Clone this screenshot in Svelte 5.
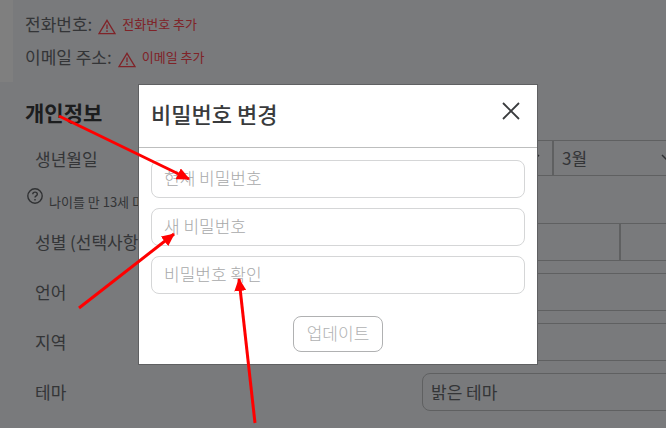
<script>
	let open = true;
	let current = '';
	let next = '';
	let confirm = '';

	let month = '3';
	let language = '';
	let region = '';
	let theme = 'light';

	const contacts = [
		{ label: '전화번호:', action: '전화번호 추가' },
		{ label: '이메일 주소:', action: '이메일 추가' }
	];

	function close() {
		open = false;
	}
</script>

<div class="page">
	<div class="account">
		<div class="side"></div>
		<div class="contacts">
			{#each contacts as contact}
				<div class="contact">
					<span>{contact.label}</span>
					<svg class="warning" viewBox="0 0 18 16" aria-hidden="true">
						<path d="M9 1.3 L17 14.7 H1 Z" />
						<path d="M9 5.5 V10 M9 11.3 V13" />
					</svg>
					<a href="#add">{contact.action}</a>
				</div>
			{/each}
		</div>
	</div>

	<section class="personal">
		<h2>개인정보</h2>

		<div class="row">
			<span class="label" id="birthday">생년월일</span>
			<div class="group birthday" role="group" aria-labelledby="birthday">
				<div class="select">
					<select aria-label="연도"><option value=""></option></select>
					<svg viewBox="0 0 14 8" aria-hidden="true"><path d="M1 1 L7 7 L13 1" /></svg>
				</div>
				<div class="select month">
					<select aria-label="월" bind:value={month}><option value="3">3월</option></select>
					<svg viewBox="0 0 14 8" aria-hidden="true"><path d="M1 1 L7 7 L13 1" /></svg>
				</div>
			</div>
		</div>

		<p class="hint">
			<svg viewBox="0 0 16 16" aria-hidden="true">
				<circle cx="8" cy="8" r="7.2" />
				<path d="M5.8 6.3 C5.8 3.4 10.3 3.5 10.3 6.2 C10.3 8 8 7.8 8 9.6 M8 11 V12.4" />
			</svg>
			나이를 만 13세 미만으로 변경하면
		</p>

		<div class="row">
			<span class="label">성별 (선택사항)</span>
			<div class="group gender">
				<button type="button" aria-label="남성"></button>
				<button type="button" aria-label="여성"></button>
			</div>
		</div>
		<div class="row">
			<label class="label" for="language">언어</label>
			<select id="language" bind:value={language}><option value=""></option></select>
		</div>
		<div class="row">
			<label class="label" for="region">지역</label>
			<select id="region" bind:value={region}><option value=""></option></select>
		</div>
		<div class="row">
			<label class="label" for="theme">테마</label>
			<select id="theme" bind:value={theme}><option value="light">밝은 테마</option></select>
		</div>
	</section>
</div>

{#if open}
	<div class="backdrop">
		<div class="modal" role="dialog" aria-modal="true" aria-labelledby="modal-title">
			<header>
				<h1 id="modal-title">비밀번호 변경</h1>
				<button class="close" type="button" aria-label="닫기" on:click={close}>
					<svg viewBox="0 0 18 18" aria-hidden="true"><path d="M1 1 L17 17 M17 1 L1 17" /></svg>
				</button>
			</header>
			<form on:submit|preventDefault={close}>
				<input type="password" placeholder="현재 비밀번호" aria-label="현재 비밀번호" bind:value={current} />
				<input type="password" placeholder="새 비밀번호" aria-label="새 비밀번호" bind:value={next} />
				<input type="password" placeholder="비밀번호 확인" aria-label="비밀번호 확인" bind:value={confirm} />
				<button class="update" disabled={!current || !next || next !== confirm}>업데이트</button>
			</form>
		</div>
	</div>
{/if}

<svg class="arrows" width="666" height="428" viewBox="0 0 666 428" aria-hidden="true">
	<defs>
		<marker id="head" viewBox="0 0 13 12" refX="12" refY="6" markerWidth="13" markerHeight="12" markerUnits="userSpaceOnUse" orient="auto">
			<path d="M0 0 L13 6 L0 12 Z" />
		</marker>
	</defs>
	<path d="M59 116 L189 179" />
	<path d="M79 308 L174 234" />
	<path d="M255 423 L239 279" />
</svg>

<style>
	:global(body) {
		margin: 0;
		background: #f2f4f8;
		overflow: hidden;
	}

	.page,
	.modal,
	button,
	input,
	select {
		font-family: 'Noto Sans CJK KR', sans-serif;
		font-size: 17px;
		line-height: 24px;
		font-weight: 400;
		box-sizing: border-box;
	}

	.page {
		color: #686b6f;
		height: 100vh;
		overflow: hidden;
	}

	.account {
		display: flex;
		height: 82px;
	}

	.side {
		width: 13px;
		background: #fff;
	}

	.contacts {
		display: flex;
		flex-direction: column;
		gap: 9px;
		padding: 12px;
	}

	.contact {
		display: flex;
		align-items: center;
		gap: 6px;
	}

	.contact a {
		color: #ff4650;
		font-size: 13px;
		text-decoration: none;
	}

	.warning {
		width: 18px;
		height: 16px;
		margin-top: 6px;
		fill: none;
		stroke: #ff4650;
		stroke-width: 1.3;
	}

	.personal {
		padding-left: 25px;
	}

	h2 {
		margin: 0;
		padding: 15px 0 13px;
		font-size: 21px;
		line-height: 30px;
		font-weight: 700;
		color: #393b3d;
	}

	.row {
		display: grid;
		grid-template-columns: 387px minmax(396px, 1fr);
		align-items: center;
		height: 38px;
		margin-bottom: 12px;
		padding-left: 10px;
	}

	.row select,
	.gender {
		width: 100%;
		height: 38px;
	}

	select {
		appearance: none;
		margin: 0;
		padding: 0 8px;
		border: 1px solid #bec0c2;
		border-radius: 8px;
		background: transparent;
		color: #686b6f;
	}

	.group {
		display: flex;
	}

	.group .select {
		position: relative;
		display: flex;
		flex: 0 0 131px;
	}

	.group .month {
		flex-basis: 135px;
	}

	.group select {
		height: 36px;
		margin-bottom: 2px;
		border-radius: 0;
	}

	.select svg {
		position: absolute;
		right: 13px;
		top: 14px;
		width: 14px;
		height: 8px;
		fill: none;
		stroke: #606367;
		stroke-width: 1.5;
		pointer-events: none;
	}

	.gender button {
		flex: 1;
		border: 1px solid #bec0c2;
		background: transparent;
	}

	.hint {
		display: flex;
		align-items: center;
		gap: 6px;
		width: 300px;
		height: 24px;
		margin: 0 0 9px 2px;
		font-size: 13px;
		white-space: nowrap;
	}

	.hint svg {
		width: 16px;
		height: 16px;
		margin-bottom: 12px;
		fill: none;
		stroke: #606367;
		stroke-width: 1.4;
	}

	.backdrop {
		position: fixed;
		inset: 0;
		display: flex;
		align-items: center;
		justify-content: center;
		padding: 21px 0 0 10px;
		background: rgba(0, 0, 0, 0.5);
	}

	.modal {
		width: 400px;
		max-width: 100%;
		border: 1px solid #5f6062;
		background: #fff;
	}

	header {
		display: flex;
		align-items: center;
		justify-content: space-between;
		height: 62px;
		padding: 0 17px 0 12px;
		border-bottom: 1px solid #bdbebe;
	}

	h1 {
		margin: 0;
		padding-bottom: 6px;
		font-size: 22px;
		line-height: 30px;
		font-weight: 500;
		color: #393b3d;
	}

	.close {
		display: flex;
		padding: 0;
		border: 0;
		background: none;
		cursor: pointer;
	}

	.close svg {
		width: 18px;
		height: 18px;
		margin-bottom: 10px;
		fill: none;
		stroke: #393b3d;
		stroke-width: 1.8;
	}

	form {
		display: flex;
		flex-direction: column;
		gap: 10px;
		padding: 12px;
	}

	input {
		width: 100%;
		height: 38px;
		padding: 0 12px 4px;
		border: 1px solid #d5d6d7;
		border-radius: 8px;
		color: #393b3d;
		font-weight: 300;
	}

	input::placeholder {
		color: #a8a9aa;
		opacity: 1;
	}

	.update {
		align-self: center;
		width: 90px;
		height: 36px;
		margin-top: 12px;
		padding: 0 0 2px;
		border: 1px solid #b0b1b2;
		border-radius: 8px;
		background: #fff;
		color: #b0b1b2;
		font-weight: 300;
	}

	.arrows {
		position: absolute;
		top: 0;
		left: 0;
		pointer-events: none;
	}

	.arrows > path {
		fill: none;
		stroke: #f00;
		stroke-width: 3;
		marker-end: url(#head);
	}

	.arrows marker path {
		fill: #f00;
	}
</style>
